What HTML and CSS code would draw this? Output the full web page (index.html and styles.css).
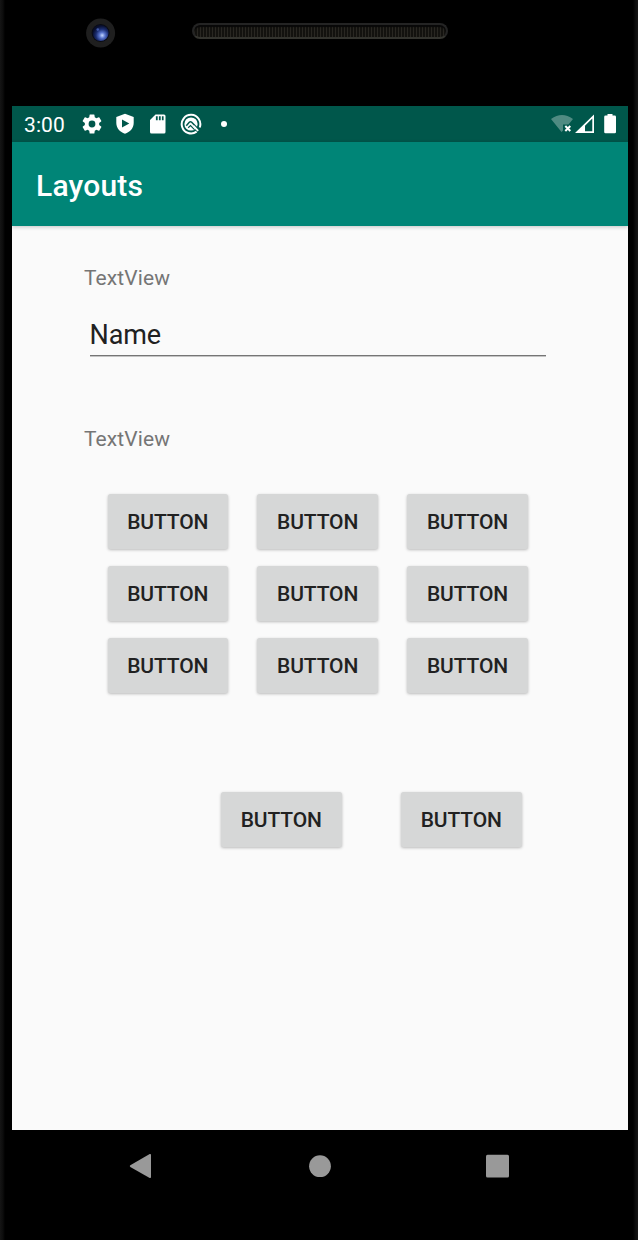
FILE: index.html
```html
<!DOCTYPE html>
<html lang="en">
<head>
<meta charset="utf-8">
<title>Layouts</title>
<link rel="stylesheet" href="styles.css">
</head>
<body>
<div class="phone">
  <div class="bezel">
    <svg class="camera" width="32" height="32" viewBox="0 0 32 32">
      <defs><radialGradient id="lens" cx=".6" cy=".65" r=".6"><stop offset="0" stop-color="#c6d8ff"/><stop offset=".3" stop-color="#5873cb"/><stop offset=".65" stop-color="#1b2d70"/><stop offset="1" stop-color="#080e2c"/></radialGradient></defs>
      <circle cx="15.600" cy="16" r="14.500" fill="#1f1f1f"/>
      <circle cx="15.600" cy="16" r="9" fill="#090b14"/>
      <circle cx="15.600" cy="16" r="8" fill="url(#lens)"/>
      <circle cx="12.800" cy="12.600" r="1.300" fill="#4058a6"/>
    </svg>
    <div class="speaker"></div>
  </div>
  <main class="screen">
    <header class="status">
      <span class="clock">3:00</span>
      <svg class="icon gear" width="24" height="24" viewBox="0 0 24 24"><path fill="#fff" fill-rule="evenodd" d="M19.14 12.94c.04-.3.06-.61.06-.94s-.02-.64-.07-.94l2.03-1.58a.49.49 0 0 0 .12-.61l-1.92-3.32a.49.49 0 0 0-.59-.22l-2.39.96a7 7 0 0 0-1.62-.94l-.36-2.54a.48.48 0 0 0-.48-.41h-3.84a.47.47 0 0 0-.47.41l-.36 2.54a7.4 7.4 0 0 0-1.62.94l-2.39-.96a.48.48 0 0 0-.59.22L2.73 8.87a.47.47 0 0 0 .12.61l2.03 1.58a7.5 7.5 0 0 0 0 1.88l-2.03 1.58a.49.49 0 0 0-.12.61l1.92 3.32c.12.22.37.29.59.22l2.39-.96c.5.38 1.03.7 1.62.94l.36 2.54c.05.24.24.41.48.41h3.84c.24 0 .44-.17.47-.41l.36-2.54a7.1 7.1 0 0 0 1.62-.94l2.39.96c.22.08.47 0 .59-.22l1.92-3.32a.47.47 0 0 0-.12-.61zM12 15.4a3.4 3.4 0 1 1 0-6.8 3.4 3.4 0 0 1 0 6.8z"/></svg>
      <svg class="icon" width="22" height="22" viewBox="0 0 22 22"><path fill="#fff" fill-rule="evenodd" d="M11 .8 19.7 4.1V10c0 5.1-3.7 9.2-8.7 10.7C6 19.200 2.300 15.100 2.300 10V4.100zM8 6.500v8L15.300 10.500z"/></svg>
      <svg class="icon" width="22" height="22" viewBox="0 0 22 22"><path fill="#fff" fill-rule="evenodd" d="M8.500 1.500H17q1.500 0 1.500 1.500V19q0 1.500-1.500 1.500H4.500q-1.500 0-1.500-1.500V7zM8.900 3.300v3.900h1.800V3.300zm3 0v3.900h1.800V3.300zm3 0v3.900h1.700V3.300z"/></svg>
      <svg class="icon" width="22" height="22" viewBox="0 0 22 22" fill="none"><path stroke="#fff" stroke-width="2" d="M16.600 18.600A9.300 9.300 0 1 1 19.700 14.500"/><circle cx="11" cy="11" r="6.600" fill="#fff"/><path stroke="#00574b" stroke-width="1.500" d="M6.300 12.700 9.300 9.300Q10.500 8.200 11.700 9.300L18 15.800"/><path stroke="#00574b" stroke-width="1.200" d="M8.200 14.700 10.500 12.600 14.500 16.600"/><path stroke="#fff" stroke-width="1.800" d="M13.500 13 18.200 17.800"/></svg>
      <span class="dot"></span>
      <svg class="signals" width="72" height="24" viewBox="0 0 72 24">
        <path fill="#4f8b82" d="M3 6Q14 -2 25 6L20.500 11.500H15V17.500L13.500 19z"/>
        <path stroke="#fff" stroke-width="2" d="m17.300 13 5 5m0-5-5 5"/>
        <path fill="#fff" fill-rule="evenodd" d="M27 20 46 1.500V20zM37 12.700V18.300H44.300V5.500z"/>
        <path fill="#fff" d="M59.500 1h5v1.600h2.200q1.300 0 1.300 1.300v15q0 1.300-1.300 1.300h-9.200q-1.300 0-1.300-1.300v-15q0-1.300 1.300-1.300h2z"/>
      </svg>
    </header>
    <div class="appbar"><h1 class="title">Layouts</h1></div>
    <section class="content">
      <div class="label">TextView</div>
      <div class="field">Name</div>
      <div class="label second">TextView</div>
      <div class="grid">
        <button class="btn">BUTTON</button><button class="btn">BUTTON</button><button class="btn">BUTTON</button>
        <button class="btn">BUTTON</button><button class="btn">BUTTON</button><button class="btn">BUTTON</button>
        <button class="btn">BUTTON</button><button class="btn">BUTTON</button><button class="btn">BUTTON</button>
      </div>
      <div class="pair"><button class="btn">BUTTON</button><button class="btn">BUTTON</button></div>
    </section>
  </main>
  <nav class="nav">
    <svg width="616" height="72" viewBox="0 0 616 72" fill="#999">
      <path d="M118.300 35.200 137.700 24.100Q139 23.500 139 25V47Q139 48.500 137.700 47.900L118.300 36.900Q117.200 36 118.300 35.200z"/>
      <circle cx="308" cy="36.200" r="10.900"/>
      <rect x="474" y="24.800" width="23" height="22.800" rx="1.500"/>
    </svg>
  </nav>
</div>
</body>
</html>
```
FILE: styles.css
```css
* { box-sizing: border-box; }
body { margin: 0; background: #000; font-family: Roboto, "Liberation Sans", sans-serif; }
.phone {
  width: 638px; height: 1240px; padding: 0 10px 0 12px; overflow: hidden;
  background: linear-gradient(90deg, #151515 0, #0c0c0c 3px, #000 5px, #000 633px, #0b0b0b 635px, #151515 638px);
}
.bezel { height: 106px; display: flex; align-items: flex-start; }
.camera { margin: 17px 0 0 73px; }
.speaker {
  width: 256px; height: 16px; margin: 23px 0 0 75px; border-radius: 8px;
  border: 2px solid #242424; border-bottom-color: #34342f;
  background: repeating-linear-gradient(90deg, #292722 0 1px, #13120f 1px 3px);
  box-shadow: inset 0 2px 1px #080808;
}
.screen { height: 1024px; background: #fafafa; }
.status { height: 36px; display: flex; align-items: center; background: #00574b; padding: 0 8px 0 12px; }
.clock { width: 56px; font-size: 21px; line-height: 36px; color: #fff; padding-top: 2px; letter-spacing: .1px; }
.icon { flex: none; margin-right: 11px; }
.gear { margin-right: 10px; }
.dot { width: 6px; height: 6px; border-radius: 50%; background: #fff; margin-left: 8px; }
.signals { margin-left: auto; margin-top: 2px; }
.appbar {
  height: 84px; background: #008577; display: flex; align-items: center; padding: 3px 24px 0;
  box-shadow: 0 1px 4px rgba(0, 0, 0, .22);
}
.title { margin: 0; font-size: 30px; font-weight: 500; line-height: 37px; color: #fff; letter-spacing: .2px; }
.content { padding: 39px 72px 0; }
.label { font-size: 21px; line-height: 26px; color: #757575; letter-spacing: .1px; }
.field { width: 456px; height: 47px; margin: 18px 0 0 5.500px; font-size: 27px; line-height: 52px; color: #212121; letter-spacing: -.1px; border-bottom: 1px solid #757575; box-shadow: 0 1px #c4c4c4; }
.second { margin-top: 70px; }
.grid { display: grid; grid-template-columns: repeat(3, 120.500px); gap: 17px 29.400px; margin: 41.500px 0 0 23.500px; }
.pair { display: flex; gap: 59.500px; margin: 99px 0 0 137px; }
.btn {
  width: 120.500px; height: 55px; padding: 1px 0 0; border: 0; border-radius: 2.500px;
  background: #d6d7d7; color: #212121; font: 500 21px/24px Roboto, "Liberation Sans", sans-serif; letter-spacing: -.1px;
  box-shadow: 0 1px 3px rgba(0, 0, 0, .26);
}
.nav { height: 72px; }
.nav svg { display: block; }
```
